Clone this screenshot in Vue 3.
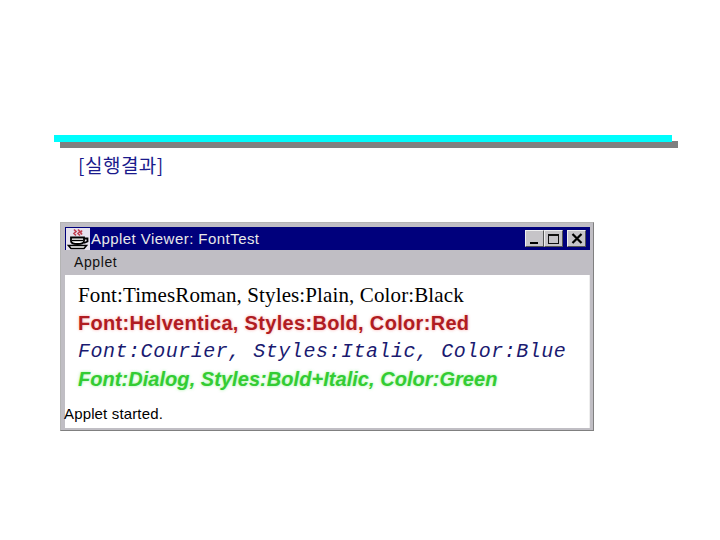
<script setup>
const lines = [
  { text: 'Font:TimesRoman, Styles:Plain, Color:Black', cls: 'times' },
  { text: 'Font:Helventica, Styles:Bold, Color:Red', cls: 'helv' },
  { text: 'Font:Courier, Styles:Italic, Color:Blue', cls: 'cour' },
  { text: 'Font:Dialog, Styles:Bold+Italic, Color:Green', cls: 'dialog' }
]
</script>

<template>
  <div class="slide">
    <div class="rule"></div>
    <div class="caption">[실행결과]</div>
    <div class="window">
      <div class="titlebar">
        <svg class="cup" width="24" height="22" viewBox="0 0 24 22">
          <rect width="24" height="22" fill="#e6e2ee" />
          <path d="M8 1.500l2 2-2 2 2 2M12 1.500l2 2-2 2 2 2M16 2.500l-1.500 2 1.500 2" fill="none" stroke="#c04050" stroke-width="1.700" />
          <path d="M5 9.500h13v3.500c0 2-3 3-6.500 3S5 15 5 13z" fill="#fff" stroke="#000" stroke-width="1.800" />
          <path d="M18 10.500h3.500v3l-3.500 1.500" fill="none" stroke="#000" stroke-width="1.800" />
          <path d="M2.500 17.500h18l-2.500 3H5z" fill="#fff" stroke="#000" stroke-width="1.600" />
          <path d="M6 12.500h11" stroke="#000" stroke-width="1.400" />
        </svg>
        <span class="title">Applet Viewer: FontTest</span>
        <div class="buttons">
          <div class="btn"><span class="min"></span></div>
          <div class="btn"><span class="max"></span></div>
          <div class="btn close">
            <svg width="12" height="11" viewBox="0 0 12 11"><path d="M1.500 1l9 9M10.500 1l-9 9" stroke="#000" stroke-width="2.200" /></svg>
          </div>
        </div>
      </div>
      <div class="menu">Applet</div>
      <div class="body">
        <div class="lines">
          <div v-for="l in lines" :key="l.cls" :class="['line', l.cls]">{{ l.text }}</div>
        </div>
        <div class="status">Applet started.</div>
      </div>
    </div>
  </div>
</template>

<style>
html, body { margin: 0; background: #fff; }
</style>

<style scoped>
.slide {
  width: 720px;
  height: 540px;
  box-sizing: border-box;
  padding: 135px 0 0 54px;
  background: #fff;
  overflow: hidden;
}
.rule {
  width: 618px;
  height: 7px;
  background: #00fdfd;
  box-shadow: 6px 6px 0 #808080;
}
.caption {
  margin: 13px 0 0 24px;
  font: 19px/20px "Noto Sans CJK KR", "Liberation Sans", sans-serif;
  color: #1a1a8c;
  height: 20px;
  letter-spacing: 0.5px;
  white-space: nowrap;
}
.window {
  margin: 47px 0 0 6px;
  width: 534px;
  height: 209px;
  box-sizing: border-box;
  background: #c0bec4;
  border: 1px solid #b4b4b4;
  border-right-color: #808080;
  border-bottom-color: #808080;
  padding: 4px 3px 2px 4px;
  display: flex;
  flex-direction: column;
  font-family: "Liberation Sans", sans-serif;
}
.titlebar {
  height: 23px;
  background: #00007c;
  display: flex;
  align-items: center;
  flex: none;
  color: #e8e8e8;
}
.cup { margin-left: 1px; flex: none; }
.title {
  margin-left: 1px;
  font-size: 15px;
  letter-spacing: 0.45px;
  white-space: nowrap;
}
.buttons {
  margin-left: auto;
  margin-right: 4px;
  display: flex;
}
.btn {
  width: 19px;
  height: 17px;
  box-sizing: border-box;
  background: #c6c4c8;
  border: 1px solid;
  border-color: #eee #555 #555 #eee;
  display: flex;
  align-items: center;
  justify-content: center;
  position: relative;
}
.close { margin-left: 4px; }
.min {
  position: absolute;
  left: 4px;
  bottom: 2px;
  width: 8px;
  height: 2px;
  background: #000;
}
.max {
  width: 11px;
  height: 10px;
  box-sizing: border-box;
  border: 1px solid #111;
  border-top-width: 2px;
}
.menu {
  height: 25px;
  flex: none;
  padding-left: 9px;
  font-size: 14px;
  line-height: 24px;
  color: #111;
  letter-spacing: 0.6px;
}
.body {
  flex: 1;
  background: #fff;
  padding: 8px 0 0 0;
  display: flex;
  flex-direction: column;
  border-right: 1px solid #eee;
}
.lines { padding-left: 13px; }
.line {
  height: 28px;
  line-height: 25px;
  white-space: nowrap;
}
.times {
  font: 21px/25px "Liberation Serif", serif;
  color: #000;
  letter-spacing: 0.12px;
}
.helv {
  font: bold 20px/25px "Liberation Sans", sans-serif;
  color: #b01c22;
  letter-spacing: 0.32px;
  text-shadow: 0 0 3px rgba(240, 60, 60, 0.45);
}
.cour {
  font: italic 20px/25px "Liberation Mono", monospace;
  color: #1a1a70;
  letter-spacing: 0.52px;
}
.dialog {
  font: italic bold 20px/25px "Liberation Sans", sans-serif;
  color: #33cc33;
  letter-spacing: 0.05px;
  text-shadow: 0 0 3px rgba(60, 230, 60, 0.5);
}
.status {
  margin-top: auto;
  margin-left: -1px;
  padding-bottom: 5px;
  font-size: 15px;
  line-height: 18px;
  letter-spacing: 0.15px;
  color: #000;
}
</style>
